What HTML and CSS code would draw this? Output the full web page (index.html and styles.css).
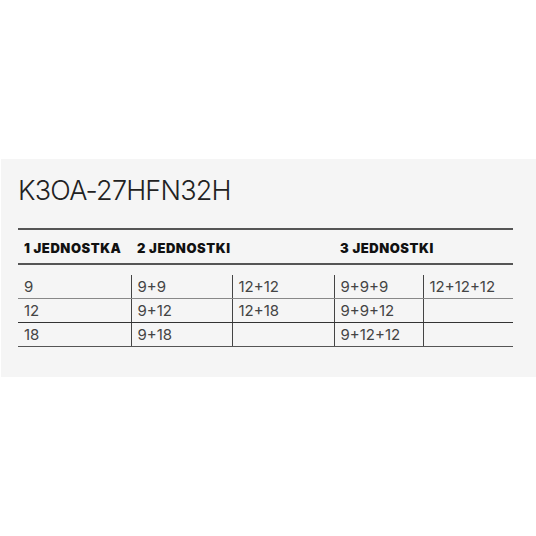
FILE: index.html
```html
<!DOCTYPE html>
<html>
<head>
<meta charset="utf-8">
<link rel="stylesheet" href="styles.css">
</head>
<body>
<div class="panel">
  <h1 class="title">K3OA-27HFN32H</h1>
  <table class="spec">
    <colgroup>
      <col class="c1"><col class="c2"><col class="c3"><col class="c4"><col class="c5">
    </colgroup>
    <thead>
      <tr class="head">
        <th>1 JEDNOSTKA</th>
        <th colspan="2">2 JEDNOSTKI</th>
        <th colspan="2">3 JEDNOSTKI</th>
      </tr>
      <tr class="gap"><td colspan="5"></td></tr>
    </thead>
    <tbody>
      <tr class="r1">
        <td>9</td><td class="v">9+9</td><td class="v">12+12</td><td class="v">9+9+9</td><td class="v">12+12+12</td>
      </tr>
      <tr class="r2">
        <td>12</td><td class="v">9+12</td><td class="v">12+18</td><td class="v">9+9+12</td><td class="v"></td>
      </tr>
      <tr class="r3">
        <td>18</td><td class="v">9+18</td><td class="v"></td><td class="v">9+12+12</td><td class="v"></td>
      </tr>
    </tbody>
  </table>
</div>
</body>
</html>
```

FILE: styles.css
```css
html, body {
  margin: 0;
  padding: 0;
  background: #ffffff;
}
body {
  padding-top: 159px;
  font-family: Inter, "Liberation Sans", sans-serif;
}
.panel {
  width: 512px;
  margin-left: 1px;
  background: #f5f5f5;
  padding: 15px 17px 30px 17px;
}
.title {
  margin: 0 0 20px 0;
  font-family: Inter, sans-serif;
  font-weight: 300;
  font-size: 27px;
  line-height: 34px;
  color: #222;
  letter-spacing: -0.8px;
}
.spec {
  border-collapse: collapse;
  table-layout: fixed;
  width: 495px;
}
.c1 { width: 113px; }
.c2 { width: 101px; }
.c3 { width: 102px; }
.c4 { width: 89px; }
.c5 { width: 90px; }
.head th {
  text-align: left;
  font-family: Inter, sans-serif;
  font-weight: 900;
  font-size: 13px;
  letter-spacing: 0.55px;
  color: #111;
  padding: 2px 0 0 6px;
  height: 31px;
  border-top: 2px solid #555;
  border-bottom: 2px solid #555;
  white-space: nowrap;
}
.gap td {
  height: 10px;
  padding: 0;
}
tbody td {
  font-size: 15px;
  color: #444;
  padding: 1px 0 0 6px;
  height: 22px;
  line-height: 18px;
  white-space: nowrap;
}
tbody td.v {
  border-left: 1px solid #444;
}
.r1 td { border-bottom: 1px solid #888; }
.r2 td { border-bottom: 1px solid #333; }
.r3 td { border-bottom: 1px solid #555; }
```
